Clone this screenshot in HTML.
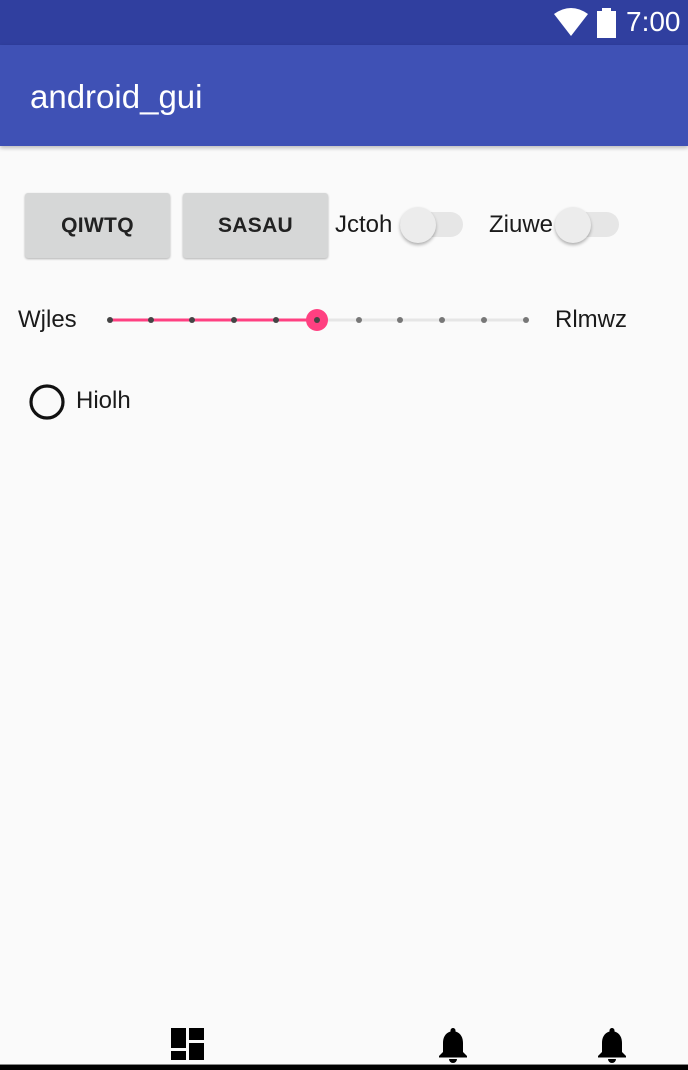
<!DOCTYPE html>
<html><head><meta charset="utf-8"><style>
*{margin:0;padding:0;box-sizing:border-box}
body{width:688px;height:1070px;background:#fafafa;font-family:"Liberation Sans",sans-serif;position:relative;overflow:hidden}
.sb{position:absolute;left:0;top:0;width:688px;height:45px;background:#303f9f}
.tb{position:absolute;left:0;top:45px;width:688px;height:101px;background:#3f51b5;box-shadow:0 2px 4px rgba(0,0,0,.25)}
.title{position:absolute;left:30px;top:78px;color:#fff;font-size:33px}
.btn{position:absolute;top:193px;width:145px;height:65px;background:#d6d7d7;border-radius:3px;box-shadow:0 1px 2px rgba(0,0,0,.3);font-size:21px;font-weight:bold;color:#222;display:flex;align-items:center;justify-content:center;letter-spacing:.3px}
.t{position:absolute;font-size:24px;color:#1a1a1a}
.track{position:absolute;top:212px;width:63px;height:25px;border-radius:13px;background:#e6e6e6}
.thumb{position:absolute;width:36px;height:36px;border-radius:50%;background:#ececec;box-shadow:0 2px 3px rgba(0,0,0,.3)}
</style></head><body>
<div class="sb"></div>
<svg style="position:absolute;left:554px;top:8px" width="34" height="28" viewBox="0 0 34 28"><path d="M0 6 Q17 -6 34 6 L17 28 Z" fill="#fff"/></svg>
<div style="position:absolute;left:597px;top:11px;width:19px;height:27px;background:#fff"></div>
<div style="position:absolute;left:602px;top:8px;width:9px;height:4px;background:#fff"></div>
<div style="position:absolute;left:626px;top:6px;color:#fff;font-size:28px">7:00</div>
<div class="tb"></div>
<div class="title">android_gui</div>
<div class="btn" style="left:25px">QIWTQ</div>
<div class="btn" style="left:183px">SASAU</div>
<div class="t" style="left:335px;top:211px">Jctoh</div>
<div class="track" style="left:400px"></div>
<div class="thumb" style="left:400px;top:207px"></div>
<div class="t" style="left:489px;top:211px">Ziuwe</div>
<div class="track" style="left:556px"></div>
<div class="thumb" style="left:555px;top:207px"></div>
<div class="t" style="left:18px;top:306px;font-weight:500">Wjles</div>
<div class="t" style="left:555px;top:306px;font-weight:500">Rlmwz</div>
<svg style="position:absolute;left:0;top:300px" width="688" height="40">
<line x1="110" y1="20" x2="526" y2="20" stroke="#e6e6e6" stroke-width="3"/>
<line x1="110" y1="20" x2="317" y2="20" stroke="#ff4081" stroke-width="3"/>
<circle cx="317" cy="20" r="11" fill="#ff4081"/>
<g fill="#444"><circle cx="110" cy="20" r="3"/><circle cx="151" cy="20" r="3"/><circle cx="192" cy="20" r="3"/><circle cx="234" cy="20" r="3"/><circle cx="276" cy="20" r="3"/><circle cx="317" cy="20" r="3"/></g>
<g fill="#777"><circle cx="359" cy="20" r="3"/><circle cx="400" cy="20" r="3"/><circle cx="442" cy="20" r="3"/><circle cx="484" cy="20" r="3"/><circle cx="526" cy="20" r="3"/></g>
</svg>
<svg style="position:absolute;left:28px;top:383px" width="40" height="40"><circle cx="19" cy="19" r="16" fill="none" stroke="#111" stroke-width="3.2"/></svg>
<div class="t" style="left:76px;top:387px">Hiolh</div>
<svg style="position:absolute;left:171px;top:1028px" width="34" height="33"><g fill="#000"><rect x="0" y="0" width="15" height="20"/><rect x="18" y="0" width="15" height="12"/><rect x="0" y="23" width="15" height="9"/><rect x="18" y="15" width="15" height="17"/></g></svg>
<svg style="position:absolute;left:437px;top:1026px" width="32" height="38" viewBox="0 0 32 38"><path d="M16 2 a2.5 2.5 0 0 1 2.5 2.5 v1 C24 7 26 12 26 17 v9 l4 4 v1.5 H2 V30 l4-4 v-9 C6 12 8 7 13.5 5.5 v-1 A2.5 2.5 0 0 1 16 2 Z M12 33 h8 a4 4 0 0 1 -8 0Z" fill="#000"/></svg>
<svg style="position:absolute;left:596px;top:1026px" width="32" height="38" viewBox="0 0 32 38"><path d="M16 2 a2.5 2.5 0 0 1 2.5 2.5 v1 C24 7 26 12 26 17 v9 l4 4 v1.5 H2 V30 l4-4 v-9 C6 12 8 7 13.5 5.5 v-1 A2.5 2.5 0 0 1 16 2 Z M12 33 h8 a4 4 0 0 1 -8 0Z" fill="#000"/></svg>
<div style="position:absolute;left:0;top:1064px;width:688px;height:1px;background:#888"></div>
<div style="position:absolute;left:0;top:1065px;width:688px;height:5px;background:#000"></div>
</body></html>
